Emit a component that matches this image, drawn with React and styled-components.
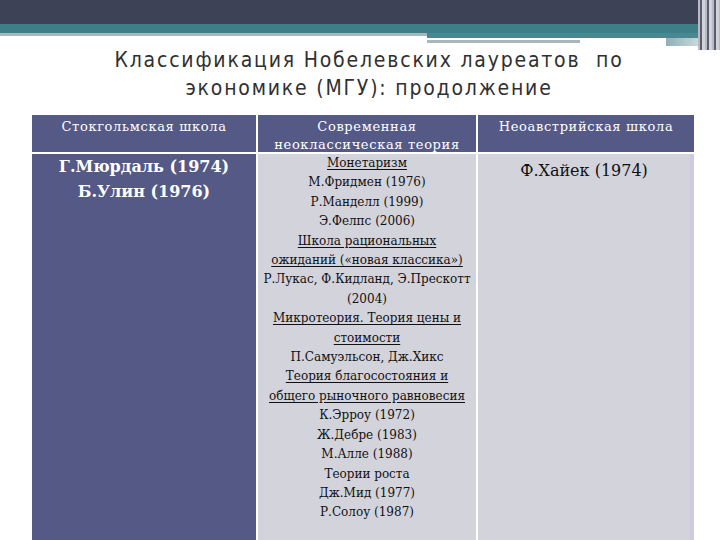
import styled, { createGlobalStyle } from "styled-components";

const GlobalStyle = createGlobalStyle`
  html, body {
    margin: 0;
    padding: 0;
    background: #ffffff;
  }
`;

const Slide = styled.div`
  width: 720px;
  height: 540px;
  overflow: hidden;
  display: flex;
  flex-direction: column;
  background: #ffffff;
`;

const Decor = styled.div`
  display: flex;
  height: 46px;
`;

const Bands = styled.div`
  flex: 1;
  display: flex;
  flex-direction: column;
`;

const Band = styled.div`
  height: ${({ h }) => h}px;
  background: ${({ color }) => color};
  width: ${({ w }) => (w ? `${w}px` : "auto")};
`;

const LowerRow = styled.div`
  display: flex;
  flex: 1;
`;

const LeftStrip = styled.div`
  width: 427px;
  display: flex;
  flex-direction: column;
`;

const RightBlock = styled.div`
  flex: 1;
  display: flex;
  flex-direction: column;
  background: linear-gradient(to right, transparent 0, transparent 239px, #8fb0b5 239px, #c9d8da 100%);
`;

const Stripes = styled.div`
  width: 22px;
  height: 50px;
  background: repeating-linear-gradient(
    to right,
    #b9bbc4 0,
    #b9bbc4 2px,
    #5a5d6d 2px,
    #5a5d6d 4px,
    #d2d3da 4px,
    #d2d3da 7px
  );
`;

const Title = styled.h1`
  margin: 0 0 13px 0;
  padding-left: 18px;
  font-family: "DejaVu Sans Condensed", "DejaVu Sans", sans-serif;
  font-weight: normal;
  font-size: 21px;
  line-height: 28px;
  letter-spacing: 1.8px;
  color: #303030;
  text-align: center;
  white-space: pre;
`;

const Table = styled.div`
  margin-left: 32px;
  width: 662px;
  flex: 1;
  display: grid;
  grid-template-columns: 224px 218px 216px;
  grid-template-rows: 37px 1fr;
  column-gap: 2px;
  row-gap: 2px;
`;

const HeadCell = styled.div`
  background: #545986;
  color: #ffffff;
  font-family: "DejaVu Serif", serif;
  font-size: 13px;
  line-height: 18px;
  letter-spacing: 0.65px;
  text-align: center;
  padding-top: 3px;
  white-space: pre;
  position: relative;
  z-index: 0;
`;

const BodyCell = styled.div`
  background: ${({ dark }) => (dark ? "#545986" : "#d3d3dc")};
  color: ${({ dark }) => (dark ? "#ffffff" : "#111111")};
  font-family: "DejaVu Serif", serif;
  text-align: center;
  padding-top: ${({ pt }) => pt || 0}px;
  border-right: ${({ edge }) => (edge ? "4px solid #cdcbe0" : "none")};
  position: relative;
  z-index: 1;
`;

const BigLine = styled.div`
  font-size: 16px;
  line-height: 25px;
  font-weight: ${({ bold }) => (bold ? "bold" : "normal")};
`;

const SmallLine = styled.div`
  font-size: 12px;
  line-height: 19.4px;
  text-decoration: ${({ heading }) => (heading ? "underline" : "none")};
  text-underline-offset: 2px;
`;

const neoclassic = [
  ["Монетаризм", true],
  ["М.Фридмен (1976)"],
  ["Р.Манделл (1999)"],
  ["Э.Фелпс (2006)"],
  ["Школа рациональных", true],
  ["ожиданий («новая классика»)", true],
  ["Р.Лукас, Ф.Кидланд, Э.Прескотт"],
  ["(2004)"],
  ["Микротеория. Теория  цены и", true],
  ["стоимости", true],
  ["П.Самуэльсон, Дж.Хикс"],
  ["Теория благосостояния и", true],
  ["общего рыночного равновесия", true],
  ["К.Эрроу (1972)"],
  ["Ж.Дебре (1983)"],
  ["М.Алле (1988)"],
  ["Теории роста"],
  ["Дж.Мид (1977)"],
  ["Р.Солоу (1987)"],
];

export default function App() {
  return (
    <>
      <GlobalStyle />
      <Slide>
        <Decor>
          <Bands>
            <Band h={24} color="#3e4256" />
            <Band h={9} color="#3e7e87" />
            <LowerRow>
              <LeftStrip>
                <Band h={3} color="#a7b7be" />
              </LeftStrip>
              <RightBlock>
                <Band h={5} color="#4a8790" />
                <Band h={2} w={239} color="#ffffff" />
                <Band h={3} w={153} color="#a9b6bb" />
              </RightBlock>
            </LowerRow>
          </Bands>
          <Stripes />
        </Decor>
        <Title>{"Классификация Нобелевских лауреатов  по\nэкономике (МГУ): продолжение"}</Title>
        <Table>
          <HeadCell>Стокгольмская школа</HeadCell>
          <HeadCell>{"Современная\nнеоклассическая теория"}</HeadCell>
          <HeadCell>Неоавстрийская школа</HeadCell>
          <BodyCell dark>
            <BigLine bold>Г.Мюрдаль (1974)</BigLine>
            <BigLine bold>Б.Улин (1976)</BigLine>
          </BodyCell>
          <BodyCell>
            {neoclassic.map(([text, heading], i) => (
              <SmallLine key={i} heading={heading}>
                {text}
              </SmallLine>
            ))}
          </BodyCell>
          <BodyCell pt={4} edge>
            <BigLine>Ф.Хайек (1974)</BigLine>
          </BodyCell>
        </Table>
      </Slide>
    </>
  );
}
